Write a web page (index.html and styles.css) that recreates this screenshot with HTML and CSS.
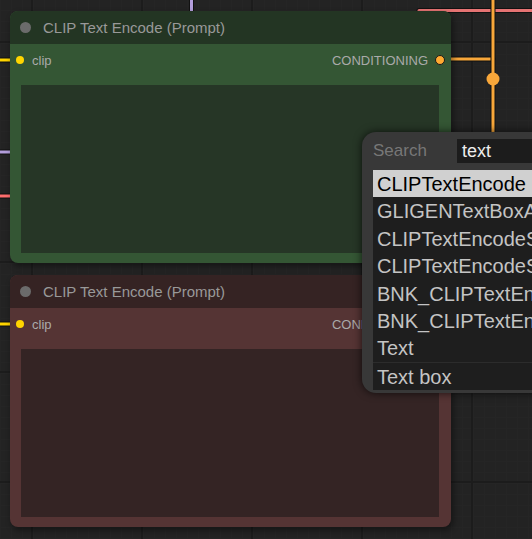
FILE: index.html
```html
<!DOCTYPE html>
<html>
<head>
<meta charset="utf-8">
<link rel="stylesheet" href="styles.css">
</head>
<body>
<div class="canvas">
  <svg class="links" width="532" height="539" viewBox="0 0 532 539">
    <g stroke-linecap="round" fill="none">
      <line x1="-5" y1="60" x2="12" y2="60" stroke="#111" stroke-width="5"/>
      <line x1="-5" y1="60" x2="12" y2="60" stroke="#ffd500" stroke-width="3"/>
      <line x1="-5" y1="152" x2="12" y2="152" stroke="#111" stroke-width="5"/>
      <line x1="-5" y1="152" x2="12" y2="152" stroke="#b39ddb" stroke-width="3"/>
      <line x1="-5" y1="196" x2="12" y2="196" stroke="#111" stroke-width="5"/>
      <line x1="-5" y1="196" x2="12" y2="196" stroke="#ff6e6e" stroke-width="3"/>
      <line x1="-5" y1="324" x2="12" y2="324" stroke="#111" stroke-width="5"/>
      <line x1="-5" y1="324" x2="12" y2="324" stroke="#ffd500" stroke-width="3"/>
      <line x1="191.5" y1="-5" x2="191.5" y2="14" stroke="#111" stroke-width="5"/>
      <line x1="191.5" y1="-5" x2="191.5" y2="14" stroke="#b39ddb" stroke-width="3"/>
      <line x1="419" y1="10.5" x2="540" y2="10.5" stroke="#111" stroke-width="5"/>
      <line x1="419" y1="10.5" x2="540" y2="10.5" stroke="#e57373" stroke-width="3"/>
      <line x1="440" y1="59" x2="493" y2="59" stroke="#111" stroke-width="5"/>
      <line x1="440" y1="59" x2="493" y2="59" stroke="#f8a73a" stroke-width="3"/>
      <line x1="493" y1="-5" x2="493" y2="160" stroke="#111" stroke-width="5"/>
      <line x1="493" y1="-5" x2="493" y2="160" stroke="#f8a73a" stroke-width="3"/>
    </g>
    <circle cx="493" cy="79" r="6.5" fill="#f8a73a"/>
  </svg>

  <div class="node node-green">
    <div class="node-title">
      <span class="title-dot"></span>
      <span class="title-text">CLIP Text Encode (Prompt)</span>
    </div>
    <div class="slot-row">
      <div class="slot-in"><span class="dot dot-clip"></span><span>clip</span></div>
      <div class="slot-out"><span>CONDITIONING</span><span class="dot dot-cond"></span></div>
    </div>
    <div class="textarea"></div>
  </div>

  <div class="node node-red">
    <div class="node-title">
      <span class="title-dot"></span>
      <span class="title-text">CLIP Text Encode (Prompt)</span>
    </div>
    <div class="slot-row">
      <div class="slot-in"><span class="dot dot-clip"></span><span>clip</span></div>
      <div class="slot-out"><span>CONDITIONING</span><span class="dot dot-cond"></span></div>
    </div>
    <div class="textarea"></div>
  </div>

  <div class="searchbox">
    <div class="search-head">
      <span class="search-label">Search</span>
      <div class="search-input">text</div>
    </div>
    <div class="helper">
      <div class="item selected">CLIPTextEncode</div>
      <div class="item">GLIGENTextBoxApply</div>
      <div class="item">CLIPTextEncodeSDXL</div>
      <div class="item">CLIPTextEncodeSDXLRefiner</div>
      <div class="item">BNK_CLIPTextEncodeAdvanced</div>
      <div class="item">BNK_CLIPTextEncodeSDXLAdvanced</div>
      <div class="item">Text</div>
      <div class="item sep">Text box</div>
    </div>
  </div>
</div>
</body>
</html>
```

FILE: styles.css
```css
* { box-sizing: border-box; }
html, body {
  margin: 0;
  padding: 0;
  width: 532px;
  height: 539px;
  overflow: hidden;
  background: #222;
}
.canvas {
  position: relative;
  width: 532px;
  height: 539px;
  overflow: hidden;
  font-family: "Liberation Sans", Arial, sans-serif;
  background-color: #232323;
  background-image:
    linear-gradient(90deg, #1c1c1c 0 2px, transparent 2px),
    linear-gradient(0deg, #1c1c1c 0 2px, transparent 2px),
    linear-gradient(90deg, #252525 0 1px, transparent 1px),
    linear-gradient(0deg, #252525 0 1px, transparent 1px);
  background-size: 110px 110px, 110px 110px, 11px 11px, 11px 11px;
  background-position: 31px 0, 0 43px, 0 0, 0 0;
}
.links {
  position: absolute;
  left: 0;
  top: 0;
  z-index: 0;
}
.node {
  position: absolute;
  left: 10px;
  width: 441px;
  height: 252px;
  border-radius: 8px;
  display: flex;
  flex-direction: column;
  z-index: 1;
  box-shadow: 2px 3px 6px rgba(0,0,0,0.45);
}
.node-green { top: 11px; background: #345634; }
.node-red { top: 275px; background: #553434; }
.node-green .node-title { background: #233523; }
.node-red .node-title { background: #352323; }
.node-title {
  height: 33px;
  border-radius: 8px 8px 0 0;
  display: flex;
  align-items: center;
  padding-left: 10px;
  gap: 12px;
}
.title-dot {
  width: 11px;
  height: 11px;
  border-radius: 50%;
  background: #6b6b6b;
  flex: none;
}
.title-text {
  color: #999;
  font-size: 15px;
}
.slot-row {
  height: 32px;
  display: flex;
  align-items: center;
  justify-content: space-between;
  padding: 0 6px 0 6px;
  font-size: 13px;
  color: #aaa;
}
.slot-in, .slot-out {
  display: flex;
  align-items: center;
}
.slot-in { gap: 8px; }
.slot-out { gap: 7px; }
.dot {
  display: block;
  border-radius: 50%;
  flex: none;
}
.dot-clip {
  width: 8px;
  height: 8px;
  background: #ffd500;
}
.dot-cond {
  width: 10px;
  height: 10px;
  background: #ffa931;
  border: 1px solid #1a1a1a;
}
.textarea {
  margin: 9px 12px 10px 11px;
  flex: 1;
}
.node-green .textarea { background: #263626; }
.node-red .textarea { background: #342424; }

.searchbox {
  position: absolute;
  left: 362px;
  top: 132px;
  width: 200px;
  height: 261px;
  background: #383838;
  border-radius: 14px 0 0 14px;
  padding: 0 0 3px 11px;
  z-index: 2;
  box-shadow: 0 0 8px rgba(0,0,0,0.7);
  display: flex;
  flex-direction: column;
}
.search-head {
  height: 38px;
  padding-top: 7px;
  display: flex;
  align-items: flex-start;
}
.search-label {
  width: 84px;
  color: #777;
  font-size: 17px;
  line-height: 24px;
}
.search-input {
  flex: 1;
  height: 24px;
  background: #1c1c1c;
  color: #eee;
  font-size: 18px;
  line-height: 24px;
  padding-left: 5px;
}
.helper {
  flex: 1;
  background: #1e1e1e;
  overflow: hidden;
}
.item {
  height: 27.4px;
  line-height: 25.4px;
  padding-top: 2px;
  font-size: 20px;
  color: #c4c4c4;
  padding-left: 4px;
  white-space: nowrap;
}
.item.selected {
  background: #d0d0d0;
  color: #000;
}
.item.sep {
  border-top: 1px solid #2c2c2c;
}
```
